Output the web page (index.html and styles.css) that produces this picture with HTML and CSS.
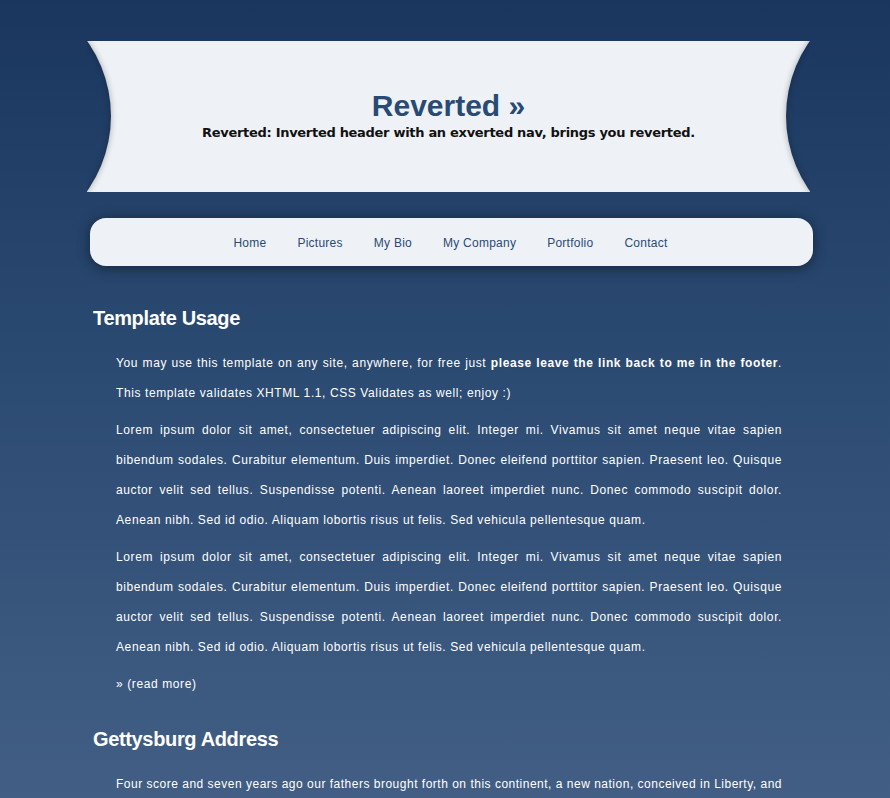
FILE: index.html
```html
<!DOCTYPE html>
<html>
<head>
<meta charset="utf-8">
<title>Reverted</title>
<link rel="stylesheet" href="styles.css">
</head>
<body>
<div class="wrap">
  <div class="header">
    <h1 class="title">Reverted &raquo;</h1>
    <p class="tagline">Reverted: Inverted header with an exverted nav, brings you reverted.</p>
  </div>
  <ul class="nav">
    <li><a href="#">Home</a></li>
    <li><a href="#">Pictures</a></li>
    <li><a href="#">My Bio</a></li>
    <li><a href="#">My Company</a></li>
    <li><a href="#">Portfolio</a></li>
    <li><a href="#">Contact</a></li>
  </ul>
  <div class="content">
    <h2 class="heading">Template Usage</h2>
    <div class="text">
      <p>You may use this template on any site, anywhere, for free just <strong>please leave the link back to me in the footer</strong>. This template validates XHTML 1.1, CSS Validates as well; enjoy :)</p>
      <p>Lorem ipsum dolor sit amet, consectetuer adipiscing elit. Integer mi. Vivamus sit amet neque vitae sapien bibendum sodales. Curabitur elementum. Duis imperdiet. Donec eleifend porttitor sapien. Praesent leo. Quisque auctor velit sed tellus. Suspendisse potenti. Aenean laoreet imperdiet nunc. Donec commodo suscipit dolor. Aenean nibh. Sed id odio. Aliquam lobortis risus ut felis. Sed vehicula pellentesque quam.</p>
      <p>Lorem ipsum dolor sit amet, consectetuer adipiscing elit. Integer mi. Vivamus sit amet neque vitae sapien bibendum sodales. Curabitur elementum. Duis imperdiet. Donec eleifend porttitor sapien. Praesent leo. Quisque auctor velit sed tellus. Suspendisse potenti. Aenean laoreet imperdiet nunc. Donec commodo suscipit dolor. Aenean nibh. Sed id odio. Aliquam lobortis risus ut felis. Sed vehicula pellentesque quam.</p>
      <p class="more">&raquo; <a href="#">(read more)</a></p>
    </div>
    <h2 class="heading">Gettysburg Address</h2>
    <div class="text">
      <p class="tight">Four score and seven years ago our fathers brought forth on this continent, a new nation, conceived in Liberty, and dedicated to the proposition that all men are created equal.</p>
    </div>
  </div>
</div>
</body>
</html>
```
FILE: styles.css
```css
html, body {
  margin: 0;
  padding: 0;
}
body {
  background: linear-gradient(180deg, #1a365e 0%, #2b4a72 45%, #425e84 100%) fixed;
  min-height: 798px;
  font-family: "Liberation Sans", Arial, sans-serif;
  color: #fff;
}
.wrap {
  width: 730px;
  margin: 0 auto;
  padding-top: 41px;
}
.header {
  position: relative;
  overflow: hidden;
  margin-left: 7px;
  width: 723px;
  height: 151px;
  background: #eef2f7;
  text-align: center;
  box-sizing: border-box;
  padding-top: 47px;
}
.header::before,
.header::after {
  content: "";
  position: absolute;
  top: -55px;
  width: 260px;
  height: 260px;
  border-radius: 50%;
  background: linear-gradient(180deg, #1a365e 0%, #2b4a72 45%, #425e84 100%) fixed;
  box-shadow: inset 0 0 7px rgba(0, 0, 0, 0.25), 0 0 6px rgba(0, 0, 0, 0.3);
}
.header::before {
  left: -236px;
}
.header::after {
  right: -236px;
}
.title {
  margin: 0;
  font-size: 30px;
  line-height: 36px;
  font-weight: bold;
  color: #284a74;
}
.tagline {
  margin: 0;
  font-family: "DejaVu Sans", Verdana, sans-serif;
  font-size: 13px;
  line-height: 18px;
  font-weight: bold;
  color: #111;
  letter-spacing: -0.3px;
}
.nav {
  list-style: none;
  margin: 26px 0 0 10px;
  padding: 0 2px 0 0;
  box-sizing: border-box;
  width: 723px;
  height: 48px;
  background: #eef2f7;
  border-radius: 16px;
  box-shadow: 0 2px 14px rgba(0, 0, 0, 0.45);
  display: flex;
  justify-content: center;
  align-items: center;
  gap: 31px;
}
.nav a {
  font-size: 12px;
  color: #2a4a73;
  text-decoration: none;
  letter-spacing: 0.25px;
}
.content {
  padding-top: 40px;
}
.heading {
  margin: 0 0 18px 13px;
  font-size: 20px;
  line-height: 24px;
  font-weight: bold;
  letter-spacing: -0.35px;
  color: #fff;
}
.text {
  margin-left: 36px;
  width: 666px;
  margin-bottom: 28px;
}
.text p {
  margin: 0 0 7px;
  font-size: 12px;
  line-height: 30px;
  letter-spacing: 0.6px;
  text-align: justify;
  color: #fff;
}
.text p.tight {
  letter-spacing: 0.5px;
}
.text strong {
  letter-spacing: 0.6px;
}
.text a {
  color: #fff;
  text-decoration: none;
}
```
